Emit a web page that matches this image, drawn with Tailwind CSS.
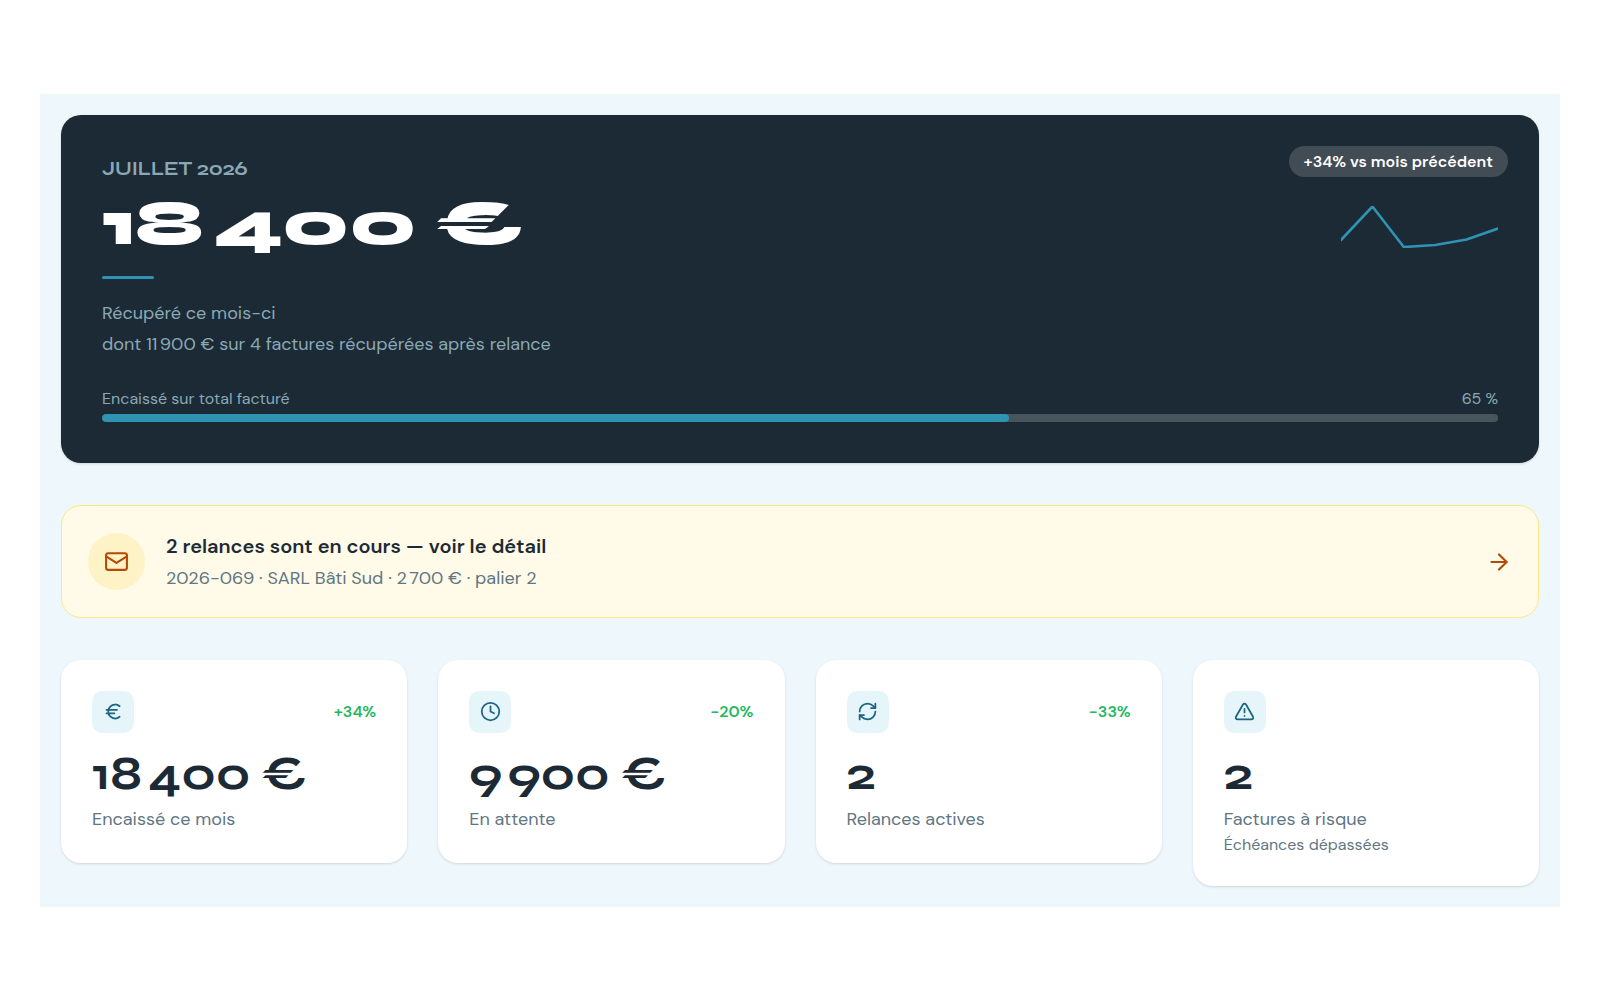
<!DOCTYPE html>
<html lang="fr">
<head>
  <meta charset="UTF-8" />
  <meta name="viewport" content="width=device-width, initial-scale=1.0"/>
  <title>Tableau de bord</title>
  <script src="https://cdn.jsdelivr.net/npm/@tailwindcss/browser@4"></script>
</head>
<body class="bg-white font-['DM_Sans','Inter',sans-serif] text-[#1c2a35]">
  <div class="flex min-h-screen flex-col justify-center p-4 sm:px-10">
    <main class="bg-[#eef7fc] p-[21px]">

      <!-- Month summary -->
      <section class="relative rounded-[20px] bg-[#1c2a35] p-[41px] text-[#8aa9b5] shadow-sm">
        <h1 class="font-['Syne','DejaVu_Sans',sans-serif] text-[19px] leading-[26px] font-bold">JUILLET 2026</h1>
        <p class="mt-[6px] font-['Syne','DejaVu_Sans',sans-serif] text-[63px] leading-[72px] font-extrabold text-white">18&#8239;400 €</p>
        <div class="mt-4 h-[3px] w-[52px] rounded-full bg-[#2f93b4]"></div>
        <p class="mt-[19px] text-[18px] leading-[31px]">Récupéré ce mois-ci</p>
        <p class="text-[18px] leading-[31px]">dont 11&#8239;900 € sur 4 factures récupérées après relance</p>
        <div class="mt-[26px] flex justify-between text-[16px] leading-[25px]">
          <span id="progress-label">Encaissé sur total facturé</span>
          <span>65 %</span>
        </div>
        <div role="progressbar" aria-labelledby="progress-label" aria-valuenow="65" aria-valuemin="0" aria-valuemax="100" class="mt-[3px] h-2 overflow-hidden rounded-full bg-[#49555d]">
          <div class="h-full rounded-full bg-[#2f93b4]" style="width: 65%"></div>
        </div>

        <!-- Trend -->
        <div class="absolute top-[31px] right-[31px] flex flex-col items-end">
          <span class="rounded-full bg-[#414c55] px-[15px] text-[16px] leading-[31px] font-semibold text-white">+34% vs mois précédent</span>
          <svg class="mt-[29px] mr-[10px] h-[42px] w-[157px]" viewBox="0 0 157 42" fill="none" stroke="#2f93b4" stroke-width="2.6" stroke-linecap="round" stroke-linejoin="round" aria-hidden="true">
            <path d="M0 34 31.400 .5 62.800 41 94.200 39 125.600 33.500 157 22.500"/>
          </svg>
        </div>
      </section>

      <!-- Reminders -->
      <a href="#relances" class="mt-[42px] flex items-center gap-[21px] rounded-[20px] border border-amber-200 bg-[#fffbe8] px-[26px] pt-6 pb-[23px]">
        <span class="flex size-[57px] shrink-0 items-center justify-center rounded-full bg-[#fef2c7] text-[#b54a07]">
          <svg class="size-[25px]" viewBox="0 0 24 24" fill="none" stroke="currentColor" stroke-width="2" stroke-linecap="round" stroke-linejoin="round" aria-hidden="true">
            <rect width="20" height="16" x="2" y="4" rx="2"/>
            <path d="m22 7-10 6.300L2 7"/>
          </svg>
        </span>
        <span class="flex-1">
          <span class="block text-[20px] leading-[33px] font-semibold">2 relances sont en cours — voir le détail</span>
          <span class="block text-[18px] leading-[31px] text-[#5f7683]">2026-069 · SARL Bâti Sud · 2&#8239;700 € · palier 2</span>
        </span>
        <svg class="size-[26px] shrink-0 text-[#b54a07]" viewBox="0 0 24 24" fill="none" stroke="currentColor" stroke-width="2" stroke-linecap="round" stroke-linejoin="round" aria-hidden="true">
          <path d="M5 12h14"/>
          <path d="m12 5 7 7-7 7"/>
        </svg>
      </a>

      <!-- Key figures -->
      <section class="mt-[42px] grid grid-cols-1 items-start gap-[31px] sm:grid-cols-2 lg:grid-cols-4">
        <article class="rounded-[20px] bg-white p-[31px] shadow-sm">
          <div class="flex items-center justify-between">
            <span class="flex size-[42px] items-center justify-center rounded-[10px] bg-[#e6f5f9] text-[#1c6484]">
              <svg class="size-[21px]" viewBox="0 0 24 24" fill="none" stroke="currentColor" stroke-width="2" stroke-linecap="round" stroke-linejoin="round" aria-hidden="true">
                <path d="M4 10h12"/>
                <path d="M4 14h9"/>
                <path d="M19 6a7.700 7.700 0 0 0-5.200-2A7.900 7.900 0 0 0 6 12c0 4.400 3.500 8 7.800 8 2 0 3.800-.8 5.200-2"/>
              </svg>
            </span>
            <span class="text-[16px] font-semibold text-[#22b85c]">+34%</span>
          </div>
          <p class="mt-4 font-['Syne','DejaVu_Sans',sans-serif] text-[47px] leading-[50px] font-bold">18&#8239;400 €</p>
          <h2 class="mt-[7px] text-[18px] leading-[26px] text-[#5f7683]">Encaissé ce mois</h2>
        </article>

        <article class="rounded-[20px] bg-white p-[31px] shadow-sm">
          <div class="flex items-center justify-between">
            <span class="flex size-[42px] items-center justify-center rounded-[10px] bg-[#e6f5f9] text-[#1c6484]">
              <svg class="size-[21px]" viewBox="0 0 24 24" fill="none" stroke="currentColor" stroke-width="2" stroke-linecap="round" stroke-linejoin="round" aria-hidden="true">
                <circle cx="12" cy="12" r="10"/>
                <path d="M12 6v6l4 2"/>
              </svg>
            </span>
            <span class="text-[16px] font-semibold text-[#22b85c]">-20%</span>
          </div>
          <p class="mt-4 font-['Syne','DejaVu_Sans',sans-serif] text-[47px] leading-[50px] font-bold">9&#8239;900 €</p>
          <h2 class="mt-[7px] text-[18px] leading-[26px] text-[#5f7683]">En attente</h2>
        </article>

        <article class="rounded-[20px] bg-white p-[31px] shadow-sm">
          <div class="flex items-center justify-between">
            <span class="flex size-[42px] items-center justify-center rounded-[10px] bg-[#e6f5f9] text-[#1c6484]">
              <svg class="size-[21px]" viewBox="0 0 24 24" fill="none" stroke="currentColor" stroke-width="2" stroke-linecap="round" stroke-linejoin="round" aria-hidden="true">
                <path d="M3 12a9 9 0 0 1 9-9 9.750 9.750 0 0 1 6.740 2.740L21 8"/>
                <path d="M21 3v5h-5"/>
                <path d="M21 12a9 9 0 0 1-9 9 9.750 9.750 0 0 1-6.740-2.740L3 16"/>
                <path d="M8 16H3v5"/>
              </svg>
            </span>
            <span class="text-[16px] font-semibold text-[#22b85c]">-33%</span>
          </div>
          <p class="mt-4 font-['Syne','DejaVu_Sans',sans-serif] text-[47px] leading-[50px] font-bold">2</p>
          <h2 class="mt-[7px] text-[18px] leading-[26px] text-[#5f7683]">Relances actives</h2>
        </article>

        <article class="rounded-[20px] bg-white p-[31px] shadow-sm">
          <div class="flex items-center justify-between">
            <span class="flex size-[42px] items-center justify-center rounded-[10px] bg-[#e6f5f9] text-[#1c6484]">
              <svg class="size-[21px]" viewBox="0 0 24 24" fill="none" stroke="currentColor" stroke-width="2" stroke-linecap="round" stroke-linejoin="round" aria-hidden="true">
                <path d="m21.730 18-8-14a2 2 0 0 0-3.480 0l-8 14A2 2 0 0 0 4 21h16a2 2 0 0 0 1.730-3"/>
                <path d="M12 9v4"/>
                <path d="M12 17h.01"/>
              </svg>
            </span>
          </div>
          <p class="mt-4 font-['Syne','DejaVu_Sans',sans-serif] text-[47px] leading-[50px] font-bold">2</p>
          <h2 class="mt-[7px] text-[18px] leading-[26px] text-[#5f7683]">Factures à risque</h2>
          <p class="mt-[3px] text-[16px] leading-[20px] text-[#5f7683]">Échéances dépassées</p>
        </article>
      </section>

    </main>
  </div>
</body>
</html>
